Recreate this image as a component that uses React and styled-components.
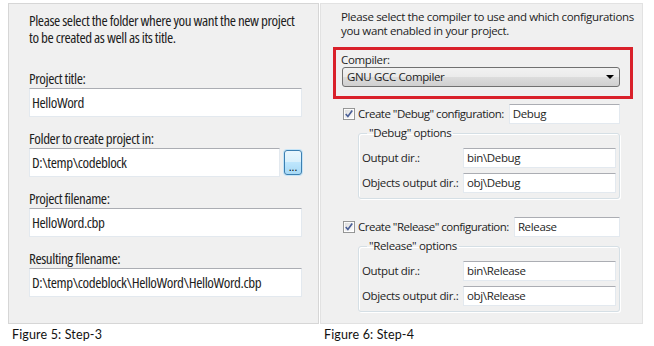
import React from 'react';
import styled, { createGlobalStyle } from 'styled-components';

const GlobalStyle = createGlobalStyle`
  html, body { margin: 0; padding: 0; background: #fff; }
  body { font-family: "Open Sans", "Liberation Sans", sans-serif; color: #000; }
  * { box-sizing: border-box; }
`;

const Page = styled.div`
  display: flex;
  gap: 1px;
  padding: 3px 0 0 8px;
`;

const Figure = styled.figure`
  margin: 0;
  display: flex;
  flex-direction: column;
  width: ${p => p.$width}px;
`;

const Panel = styled.div`
  height: 321px;
  background: #f0f0f0;
  border: 1px solid ${p => p.$border};
  display: flex;
  flex-direction: column;
`;

const Caption = styled.figcaption`
  margin-top: 4px;
  padding-left: 4px;
  font-family: Lato, "Liberation Sans", sans-serif;
  font-size: 12.5px;
  letter-spacing: 0.15px;
  line-height: 14px;
  color: #111;
`;

/* ---------- step 3 ---------- */

const WizardBody = styled.div`
  padding: 8px 16px 0 20px;
  font-size: 15px;
  line-height: 17px;
  font-stretch: 75%;
  letter-spacing: -0.4px;
  color: #1e1e1e;
`;

const Intro = styled.p`
  margin: 0 0 24px;
  white-space: nowrap;
`;

const Field = styled.div`
  display: flex;
  flex-direction: column;
  margin-bottom: 13px;
`;

const FieldLabel = styled.label`
  margin-bottom: 1px;
`;

const FieldRow = styled.div`
  display: flex;
  align-items: center;
  gap: 4px;
`;

const TextBox = styled.div`
  flex: 1;
  height: 29px;
  display: flex;
  align-items: center;
  padding-left: 2px;
  background: #fff;
  border: 1px solid #e3e9ef;
  border-top-color: #abadb3;
  white-space: nowrap;
`;

const BrowseButton = styled.button`
  width: 18px;
  height: 25px;
  padding: 0 0 3px;
  display: flex;
  align-items: flex-end;
  justify-content: center;
  border: 1px solid #3c7fb1;
  border-radius: 3px;
  box-shadow: 0 0 0 1px #c5e4f7;
  background: linear-gradient(#eaf6fd, #d9f0fc 50%, #bee6fd 50%, #a7d9f5);
  font: 11px/8px "Open Sans", sans-serif;
  color: #000;
`;

/* ---------- step 4 ---------- */

const CompilerBody = styled.div`
  padding: 6px 22px 0 20px;
  font-size: 11.5px;
  letter-spacing: -0.35px;
  line-height: 14px;
  white-space: nowrap;
  color: #1e1e1e;
`;

const Highlight = styled.div`
  margin: 9px -13px 0 -8px;
  padding: 3px 10px 9px 5px;
  border: 3px solid #d9202a;
`;

const Select = styled.div`
  height: 20px;
  margin-left: 1px;
  display: flex;
  align-items: center;
  justify-content: space-between;
  padding: 0 5px 0 4px;
  border: 1px solid #707070;
  border-radius: 3px;
  background: linear-gradient(#f2f2f2, #ebebeb 50%, #dddddd 50%, #cfcfcf);
`;

const Arrow = styled.span`
  width: 0;
  height: 0;
  border-left: 4px solid transparent;
  border-right: 4px solid transparent;
  border-top: 4px solid #000;
`;

const CheckRow = styled.div`
  display: flex;
  align-items: center;
  margin-top: ${p => p.$top}px;
  height: 20px;
`;

const CheckLabel = styled.span`
  margin: 0 5px 0 3px;
  letter-spacing: -0.5px;
`;

const SmallBox = styled.div`
  flex: ${p => (p.$grow ? 1 : 'none')};
  height: 20px;
  display: flex;
  align-items: center;
  padding-left: 3px;
  background: #fff;
  border: 1px solid #e3e9ef;
  border-top-color: #abadb3;
  letter-spacing: -0.35px;
`;

const Group = styled.fieldset`
  margin: 2px 0 0 17px;
  padding: 8px 3px 5px 3px;
  border: 1px solid #d5dfe5;
  border-radius: 3px;
  box-shadow: inset 1px 1px 0 #fff, 1px 1px 0 #fff;
  display: grid;
  grid-template-columns: 101px 1fr;
  row-gap: 5px;
  align-items: center;
`;

const Legend = styled.legend`
  margin-left: 5px;
  padding: 0 2px;
`;

const Check = () => (
  <svg width="12" height="12" viewBox="0 0 13 13" style={{ marginLeft: 2 }}>
    <defs>
      <linearGradient id="cb" x1="0" y1="0" x2="1" y2="1">
        <stop offset="0" stopColor="#dcdcdc" />
        <stop offset="1" stopColor="#fdfdfd" />
      </linearGradient>
    </defs>
    <rect x="0.5" y="0.5" width="12" height="12" fill="#fff" stroke="#8e8f8f" />
    <rect x="2" y="2" width="9" height="9" fill="url(#cb)" />
    <path d="M3 6.5 L5.3 9.2 L10 2.8" fill="none" stroke="#4a5f97" strokeWidth="1.8" />
  </svg>
);

const OptionsGroup = ({ name }) => (
  <Group>
    <Legend>"{name}" options</Legend>
    <span>Output dir.:</span>
    <SmallBox>bin\{name}</SmallBox>
    <span>Objects output dir.:</span>
    <SmallBox>obj\{name}</SmallBox>
  </Group>
);

export default function App() {
  const fields = [
    ['Project title:', 'HelloWord'],
    ['Folder to create project in:', 'D:\\temp\\codeblock', true],
    ['Project filename:', 'HelloWord.cbp'],
    ['Resulting filename:', 'D:\\temp\\codeblock\\HelloWord\\HelloWord.cbp'],
  ];

  return (
    <>
      <GlobalStyle />
      <Page>
        <Figure $width={311}>
          <Panel $border="#d6d6d6">
            <WizardBody>
              <Intro>
                Please select the folder where you want the new project
                <br />
                to be created as well as its title.
              </Intro>
              {fields.map(([label, value, browse]) => (
                <Field key={label}>
                  <FieldLabel>{label}</FieldLabel>
                  <FieldRow>
                    <TextBox>{value}</TextBox>
                    {browse && <BrowseButton>...</BrowseButton>}
                  </FieldRow>
                </Field>
              ))}
            </WizardBody>
          </Panel>
          <Caption>Figure 5: Step-3</Caption>
        </Figure>

        <Figure $width={323}>
          <Panel $border="#e2e2e2">
            <CompilerBody>
              <div>
                Please select the compiler to use and which configurations
                <br />
                you want enabled in your project.
              </div>
              <Highlight>
                <div>Compiler:</div>
                <Select>
                  <span>GNU GCC Compiler</span>
                  <Arrow />
                </Select>
              </Highlight>
              <CheckRow $top={5}>
                <Check />
                <CheckLabel>Create "Debug" configuration:</CheckLabel>
                <SmallBox $grow>Debug</SmallBox>
              </CheckRow>
              <OptionsGroup name="Debug" />
              <CheckRow $top={18}>
                <Check />
                <CheckLabel>Create "Release" configuration:</CheckLabel>
                <SmallBox $grow>Release</SmallBox>
              </CheckRow>
              <OptionsGroup name="Release" />
            </CompilerBody>
          </Panel>
          <Caption>Figure 6: Step-4</Caption>
        </Figure>
      </Page>
    </>
  );
}
